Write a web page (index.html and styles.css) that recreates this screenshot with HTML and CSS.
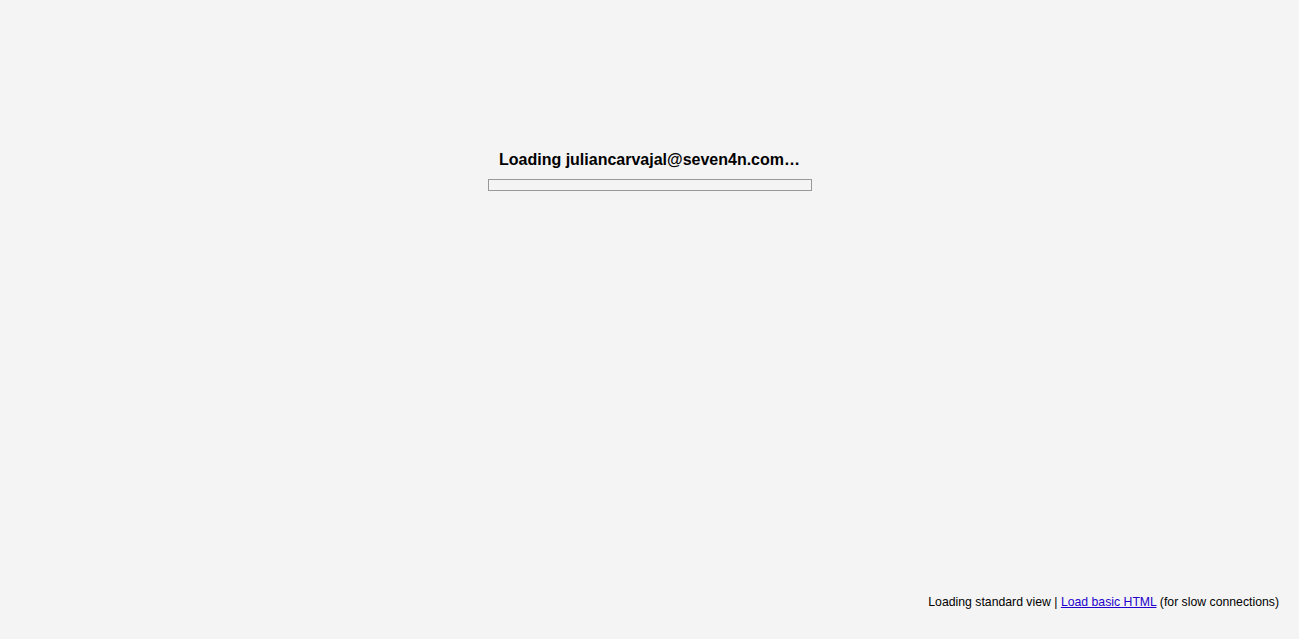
FILE: index.html
```html
<!DOCTYPE html>
<html>
<head>
<meta charset="utf-8">
<title>Gmail</title>
<link rel="stylesheet" href="styles.css">
</head>
<body>
<div class="page">
  <div class="loading">
    <div class="msg">Loading juliancarvajal@seven4n.com…</div>
    <div class="bar"></div>
  </div>
  <div class="footer">Loading standard view | <a href="#" class="link">Load basic HTML</a> (for slow connections)</div>
</div>
</body>
</html>
```
FILE: styles.css
```css
html, body {
  margin: 0;
  padding: 0;
  height: 100%;
  background: #f4f4f4;
  font-family: "Liberation Sans", Arial, sans-serif;
  color: #000;
}
.page {
  height: 100%;
  display: flex;
  flex-direction: column;
}
.loading {
  flex: 1;
  display: flex;
  flex-direction: column;
  align-items: center;
  padding-top: 151px;
}
.msg {
  font-size: 16px;
  font-weight: bold;
}
.bar {
  margin-top: 10px;
  width: 322px;
  height: 10px;
  border: 1px solid #999;
}
.footer {
  align-self: flex-end;
  font-size: 12.26px;
  padding: 0 20px 30px 0;
}
.link {
  color: #20c;
}
```
